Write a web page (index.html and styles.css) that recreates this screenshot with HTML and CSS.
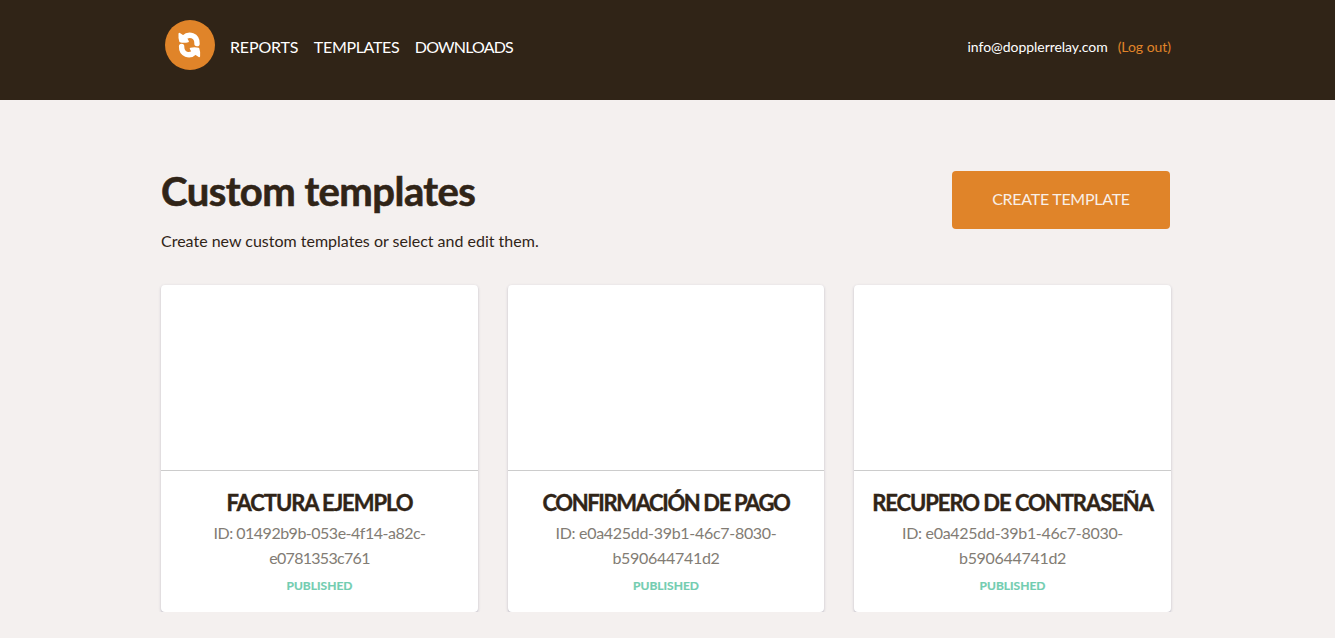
FILE: index.html
```html
<!DOCTYPE html>
<html lang="en">
<head>
<meta charset="utf-8">
<title>Custom templates</title>
<link rel="stylesheet" href="styles.css">
</head>
<body>
<header class="topbar">
  <div class="container topbar-inner">
    <svg class="logo" viewBox="0 0 50 50" aria-hidden="true">
      <circle cx="25" cy="25" r="25" fill="#e08429"/>
      <g id="arrow" stroke="#fff" stroke-linejoin="round" stroke-linecap="round">
        <path fill="none" stroke-width="5.4" d="M19 17.8 C24 13 32.2 15.4 32 23.6"/>
        <path fill="#fff" stroke-width="1.8" d="M14.4 13.8 Q14 18.5 15.2 21.4 Q19 22.4 23 21.4 L21 18 Z"/>
      </g>
      <use href="#arrow" transform="rotate(180 24.3 25)"/>
    </svg>
    <nav class="nav">
      <a class="nav-reports">REPORTS</a>
      <a class="nav-templates">TEMPLATES</a>
      <a class="nav-downloads">DOWNLOADS</a>
    </nav>
    <div class="account"><span class="email">info@dopplerrelay.com</span><a class="logout">(Log out)</a></div>
  </div>
</header>
<main class="container">
  <section class="intro">
    <div>
      <h1 class="title">Custom templates</h1>
      <p class="lead">Create new custom templates or select and edit them.</p>
    </div>
    <a class="create">CREATE TEMPLATE</a>
  </section>
  <section class="cards">
    <article class="card invoice">
      <div class="preview"></div>
      <h2 class="card-title">FACTURA EJEMPLO</h2>
      <p class="card-id">ID: 01492b9b-053e-4f14-a82c-<br><span class="id-tail">e0781353c761</span></p>
      <p class="status">PUBLISHED</p>
    </article>
    <article class="card payment">
      <div class="preview"></div>
      <h2 class="card-title">CONFIRMACIÓN DE PAGO</h2>
      <p class="card-id">ID: e0a425dd-39b1-46c7-8030-<br>b590644741d2</p>
      <p class="status">PUBLISHED</p>
    </article>
    <article class="card password">
      <div class="preview"></div>
      <h2 class="card-title">RECUPERO DE CONTRASEÑA</h2>
      <p class="card-id">ID: e0a425dd-39b1-46c7-8030-<br>b590644741d2</p>
      <p class="status">PUBLISHED</p>
    </article>
  </section>
</main>
</body>
</html>
```
FILE: styles.css
```css
* { box-sizing: border-box; }
body {
  margin: 0;
  background: #f4f0ef;
  color: #302417;
  font-family: Lato, "Liberation Sans", sans-serif;
  font-size: 16px;
}
h1, h2, p { margin: 0; }
.container { width: 1010px; margin-left: 161px; }
.topbar { height: 100px; background: #302417; color: #fff; }
.topbar-inner { display: flex; align-items: flex-start; padding: 20px 0 0 4px; }
.logo { width: 50px; height: 50px; }
.nav { display: flex; gap: 15.5px; margin-left: 15px; line-height: 24px; padding-top: 15px; }
.nav-reports { letter-spacing: -.15px; }
.nav-templates { letter-spacing: -.33px; }
.nav-downloads { letter-spacing: -.82px; }
.account { margin-left: auto; font-size: 14px; line-height: 24px; padding-top: 15px; letter-spacing: -.04px; }
.logout { color: #e08429; margin-left: 10px; }
.intro { display: flex; justify-content: space-between; padding: 71px 1px 0 0; height: 185px; }
.title { margin-top: -2px; font-size: 40px; line-height: 44px; font-weight: 700; letter-spacing: -.55px; -webkit-text-stroke: .6px #302417; }
.lead { margin-top: 16px; line-height: 24px; }
.create {
  width: 218px; height: 58px; border-radius: 4px;
  background: #e08429; color: #f8efe8;
  text-align: center; line-height: 56px; letter-spacing: -.27px;
}
.cards { display: grid; grid-template-columns: repeat(3, 1fr); gap: 29.6px; }
.card {
  height: 327px; background: #fff; border-radius: 4px; text-align: center;
  box-shadow: 0 1px 3px rgba(50, 50, 93, .24), 0 1px 1px rgba(50, 50, 93, .1);
}
.preview { height: 186px; border-bottom: 1px solid #ccc; }
.card-title { margin-top: 17px; font-size: 22px; line-height: 30px; font-weight: 700; white-space: nowrap; letter-spacing: -1.05px; -webkit-text-stroke: .4px #302417; }
.payment .card-title { letter-spacing: -1.38px; }
.card-id { margin-top: 2px; line-height: 25px; color: #827c74; letter-spacing: -.3px; }
.invoice .card-id { letter-spacing: -.5px; }
.invoice .id-tail { letter-spacing: -.7px; }
.status { margin-top: 6px; font-size: 12px; line-height: 20px; font-weight: 700; color: #72cdb0; -webkit-text-stroke: .2px #72cdb0; }
```
